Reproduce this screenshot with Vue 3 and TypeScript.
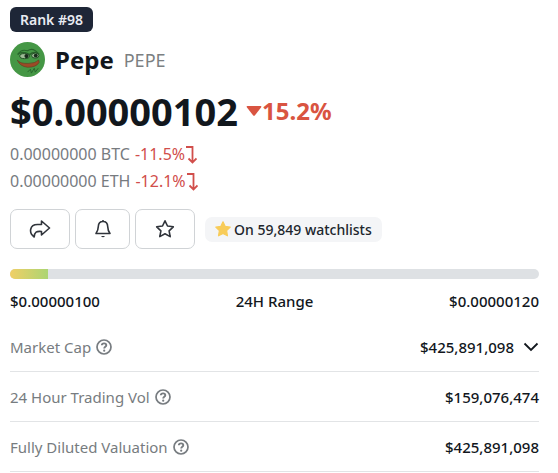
<script setup lang="ts">
interface Conversion {
  amount: string
  change: string
}

interface Stat {
  label: string
  value: string
  expandable: boolean
}

const conversions: Conversion[] = [
  { amount: '0.00000000 BTC', change: '-11.5%' },
  { amount: '0.00000000 ETH', change: '-12.1%' },
]

const stats: Stat[] = [
  { label: 'Market Cap', value: '$425,891,098', expandable: true },
  { label: '24 Hour Trading Vol', value: '$159,076,474', expandable: false },
  { label: 'Fully Diluted Valuation', value: '$425,891,098', expandable: false },
]

const rangePercent = 7.2
</script>

<template>
  <main class="coin">
    <span class="rank">Rank #98</span>

    <header class="title">
      <svg class="avatar" viewBox="0 0 36 36" aria-hidden="true">
        <circle cx="18" cy="18" r="18" fill="#459745" />
        <path d="M8 13Q11 7 18 9Q24 5 29 12" fill="none" stroke="#28652b" stroke-width="1.2" />
        <path d="M8 12.5Q13 9 20 13Q25 9 30 12.5" fill="none" stroke="#28652b" stroke-width="1.5" />
        <ellipse cx="15" cy="14.5" rx="5" ry="2.6" fill="#9dbb96" stroke="#234f25" />
        <ellipse cx="26" cy="14" rx="3.8" ry="2.6" fill="#9dbb96" stroke="#234f25" />
        <circle cx="17" cy="14.5" r="2.2" fill="#172b1b" />
        <circle cx="26.5" cy="14" r="2" fill="#172b1b" />
        <path d="M7.5 18.5Q10 22.5 19 22Q26 22 29.5 18.5L30 21Q27 26 18 26Q10 25 7.5 18.5Z" fill="#9c4a26" stroke="#63391d" stroke-width=".6" />
        <path d="M18 31l3-3 1 4 3-5 1 4 3-4" fill="none" stroke="#28652b" />
      </svg>
      <h1>Pepe</h1>
      <span class="symbol">PEPE</span>
    </header>

    <div class="price">
      <strong>$0.00000102</strong>
      <span class="drop">
        <svg width="16" height="12" viewBox="0 0 16 12" aria-hidden="true">
          <path d="M1.5 1H14.5Q16 1 15 2.4L9 10.2Q8 11.4 7 10.2L1 2.4Q0 1 1.5 1Z" fill="currentColor" />
        </svg>15.2%
      </span>
    </div>

    <div class="conversions">
      <div v-for="item in conversions" :key="item.amount" class="conversion">
        <span>{{ item.amount }}</span>
        <span class="change">{{ item.change }}<svg width="12" height="20" viewBox="0 0 12 20" aria-hidden="true">
          <path d="M1 2H7.5V17M3.5 13.5L7.5 17.5L11.5 13.5" fill="none" stroke="currentColor" stroke-width="1.8" />
        </svg></span>
      </div>
    </div>

    <div class="actions">
      <button type="button" class="wide" aria-label="Share">
        <svg width="22" height="20" viewBox="0 0 22 20">
          <path d="M12.5 2L20.5 9L12.5 16V12.5C7.5 12 5.5 13 5.2 18C-.5 14 .5 5.5 8.5 5.5H12.5Z" />
        </svg>
      </button>
      <button type="button" aria-label="Price alert">
        <svg width="18" height="20" viewBox="0 0 18 20">
          <path d="M9 2.5C5.8 2.5 4.4 4.5 4.3 7.5C4.2 11.5 3.7 12.2 2 14.5H16C14.3 12.2 13.8 11.5 13.7 7.5C13.6 4.5 12.2 2.5 9 2.5ZM9 2.5V1" />
          <path class="clapper" d="M7 17H11Q9 19.5 7 17Z" />
        </svg>
      </button>
      <button type="button" class="wide" aria-label="Add to watchlist">
        <svg width="20" height="20" viewBox="0 0 20 20">
          <path d="M10 1.8L12.5 7L18.3 7.8L14.1 11.8L15.2 17.6L10 14.8L4.8 17.6L5.9 11.8L1.7 7.8L7.5 7Z" />
        </svg>
      </button>
      <span class="watchlists">
        <svg width="16" height="16" viewBox="0 0 20 20" aria-hidden="true">
          <path d="M10 1L12.8 6.8L19 7.7L14.5 12.1L15.6 18.5L10 15.5L4.4 18.5L5.5 12.1L1 7.7L7.2 6.8Z" fill="#f8cc59" stroke="#f8cc59" stroke-width="1.5" stroke-linejoin="round" />
        </svg>
        On 59,849 watchlists
      </span>
    </div>

    <div class="range">
      <div class="track"><div class="fill" :style="{ width: `${rangePercent}%` }"></div></div>
      <div class="bounds">
        <span>$0.00000100</span>
        <span>24H Range</span>
        <span>$0.00000120</span>
      </div>
    </div>

    <dl class="stats">
      <div v-for="stat in stats" :key="stat.label" class="stat">
        <dt>
          {{ stat.label }}
          <svg width="16" height="16" viewBox="0 0 16 16" aria-hidden="true">
            <circle cx="8" cy="8" r="7" fill="none" stroke="currentColor" stroke-width="1.7" />
            <path d="M5.8 6.3C6 3.6 10.3 3.8 10.3 6.3C10.3 7.9 8.2 7.8 8.2 9.5" fill="none" stroke="currentColor" stroke-width="1.9" />
            <circle cx="8.2" cy="11.7" r="1.1" fill="currentColor" />
          </svg>
        </dt>
        <dd>
          {{ stat.value }}
          <button v-if="stat.expandable" type="button" class="expand" aria-label="Show more">
            <svg width="16" height="10" viewBox="0 0 16 10">
              <path d="M1.5 1.5L8 8L14.5 1.5" />
            </svg>
          </button>
        </dd>
      </div>
    </dl>
  </main>
</template>

<style>
body {
  margin: 0;
  background: #fff;
}
</style>

<style scoped>
.coin {
  padding: 7px 19px 0 10px;
  font-family: "Noto Sans", "Open Sans", sans-serif;
  font-size: 15px;
  color: #12171d;
}

svg {
  display: block;
  flex: none;
}

.rank {
  display: block;
  width: fit-content;
  padding: 0 10px;
  border-radius: 6px;
  background: #1e2637;
  color: #e9ebf2;
  font-size: 14px;
  font-weight: 600;
  line-height: 25px;
}

.title {
  display: flex;
  align-items: center;
  height: 35px;
  margin-top: 10px;
}

.avatar {
  width: 35px;
  height: 35px;
}

h1 {
  margin: 0 10px;
  font-size: 24px;
  font-weight: 700;
  line-height: 35px;
}

.symbol {
  color: #7b7f82;
  font-size: 18px;
  font-weight: 400;
}

.price {
  display: flex;
  align-items: center;
  gap: 8px;
  margin-top: 12px;
  line-height: 44px;
}

.price strong {
  font-size: 38px;
  font-weight: 700;
}

.drop {
  display: flex;
  align-items: center;
  color: #d95441;
  font-size: 24px;
  font-weight: 700;
}

.conversions {
  margin-top: 8px;
  color: #777b7f;
  font-size: 16px;
  font-weight: 400;
  line-height: 27px;
}

.conversion {
  display: flex;
  gap: 5px;
}

.change {
  display: flex;
  align-items: center;
  color: #d14e4b;
}

.actions {
  display: flex;
  align-items: center;
  gap: 5px;
  margin-top: 14px;
}

.actions button {
  display: flex;
  align-items: center;
  justify-content: center;
  width: 55px;
  height: 40px;
  padding: 0;
  border: 1px solid #d0d3d6;
  border-radius: 7px;
  background: #fff;
  color: #30343b;
}

.actions .wide {
  width: 60px;
}

.actions button path {
  fill: none;
  stroke: currentColor;
  stroke-width: 1.6;
  stroke-linejoin: round;
}

.actions button .clapper {
  fill: currentColor;
  stroke: none;
}

.watchlists {
  display: flex;
  align-items: center;
  gap: 3px;
  margin-left: 5px;
  padding: 0 10px;
  border-radius: 7px;
  background: #f4f5f7;
  color: #20252c;
  font-size: 14px;
  font-weight: 500;
  line-height: 25px;
}

.range {
  margin-top: 20px;
}

.track {
  height: 10px;
  overflow: hidden;
  border-radius: 5px;
  background: #dee1e4;
}

.fill {
  height: 100%;
  background: linear-gradient(90deg, #f0cf66, #acd573);
}

.bounds {
  display: flex;
  justify-content: space-between;
  margin-top: 11px;
  font-weight: 500;
  line-height: 22px;
}

.stats {
  margin: 10px 0 0;
}

.stat {
  display: flex;
  align-items: center;
  justify-content: space-between;
  height: 49px;
  border-bottom: 1px solid #e2e4e6;
}

dt {
  display: flex;
  align-items: center;
  gap: 5px;
  color: #777c80;
}

dd {
  display: flex;
  align-items: center;
  gap: 9px;
  margin: 0;
  font-weight: 500;
}

.expand {
  padding: 0;
  border: 0;
  background: none;
  color: #12171d;
}

.expand path {
  fill: none;
  stroke: currentColor;
  stroke-width: 1.8;
}
</style>
